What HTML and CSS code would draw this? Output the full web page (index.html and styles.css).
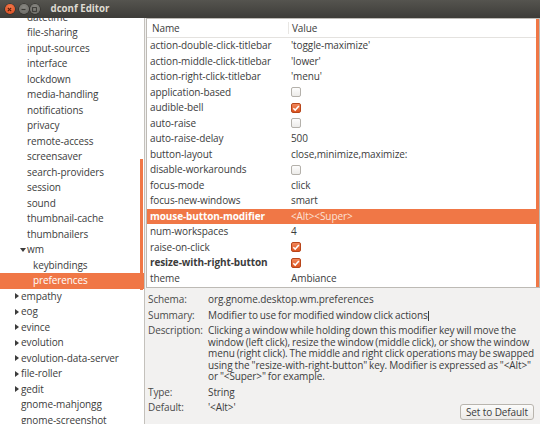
FILE: index.html
```html
<!DOCTYPE html>
<html>
<head>
<meta charset="utf-8">
<link rel="stylesheet" href="styles.css">
</head>
<body>
<div class="window">
  <div class="titlebar">
    <div class="controls">
      <span class="wbtn close"><svg width="9" height="9" viewBox="0 0 9 9"><path d="M2.8 2.8 L6.2 6.2 M6.2 2.8 L2.8 6.2" stroke="#5a1e08" stroke-width="1.2"/></svg></span>
      <span class="wbtn min"><svg width="9" height="9" viewBox="0 0 9 9"><path d="M2.5 4.5 H6.5" stroke="#3a3935" stroke-width="1.2"/></svg></span>
      <span class="wbtn max"><svg width="9" height="9" viewBox="0 0 9 9"><rect x="2.6" y="2.6" width="3.8" height="3.8" fill="none" stroke="#3a3935" stroke-width="1"/></svg></span>
    </div>
    <div class="title">dconf Editor</div>
  </div>
  <div class="body">
    <div class="sidebar">
      <div class="tree">
        <div class="node lv1"><span class="exp"></span>datetime</div>
        <div class="node lv1"><span class="exp"></span>file-sharing</div>
        <div class="node lv1"><span class="exp"></span>input-sources</div>
        <div class="node lv1"><span class="exp"></span>interface</div>
        <div class="node lv1"><span class="exp"></span>lockdown</div>
        <div class="node lv1"><span class="exp"></span>media-handling</div>
        <div class="node lv1"><span class="exp"></span>notifications</div>
        <div class="node lv1"><span class="exp"></span>privacy</div>
        <div class="node lv1"><span class="exp"></span>remote-access</div>
        <div class="node lv1"><span class="exp"></span>screensaver</div>
        <div class="node lv1"><span class="exp"></span>search-providers</div>
        <div class="node lv1"><span class="exp"></span>session</div>
        <div class="node lv1"><span class="exp"></span>sound</div>
        <div class="node lv1"><span class="exp"></span>thumbnail-cache</div>
        <div class="node lv1"><span class="exp"></span>thumbnailers</div>
        <div class="node lv1"><span class="exp open"></span>wm</div>
        <div class="node lv2"><span class="exp"></span>keybindings</div>
        <div class="node lv2 selected"><span class="exp"></span>preferences</div>
        <div class="node lv0"><span class="exp closed"></span>empathy</div>
        <div class="node lv0"><span class="exp closed"></span>eog</div>
        <div class="node lv0"><span class="exp closed"></span>evince</div>
        <div class="node lv0"><span class="exp closed"></span>evolution</div>
        <div class="node lv0"><span class="exp closed"></span>evolution-data-server</div>
        <div class="node lv0"><span class="exp closed"></span>file-roller</div>
        <div class="node lv0"><span class="exp closed"></span>gedit</div>
        <div class="node lv0"><span class="exp"></span>gnome-mahjongg</div>
        <div class="node lv0"><span class="exp"></span>gnome-screenshot</div>
      </div>
      <div class="scroll-ind side"></div>
    </div>
    <div class="main">
      <div class="keys">
        <div class="thead">
          <div class="hc1">Name</div>
          <div class="hc2">Value</div>
        </div>
        <div class="row"><div class="c1">action-double-click-titlebar</div><div class="c2">'toggle-maximize'</div></div>
        <div class="row"><div class="c1">action-middle-click-titlebar</div><div class="c2">'lower'</div></div>
        <div class="row"><div class="c1">action-right-click-titlebar</div><div class="c2">'menu'</div></div>
        <div class="row"><div class="c1">application-based</div><div class="c2"><span class="cb"></span></div></div>
        <div class="row"><div class="c1">audible-bell</div><div class="c2"><span class="cb on"><svg width="10" height="10" viewBox="0 0 10 10"><path d="M2.3 5.2 L4.2 7.1 L7.9 2.9" fill="none" stroke="#fff" stroke-width="1.5"/></svg></span></div></div>
        <div class="row"><div class="c1">auto-raise</div><div class="c2"><span class="cb"></span></div></div>
        <div class="row"><div class="c1">auto-raise-delay</div><div class="c2">500</div></div>
        <div class="row"><div class="c1">button-layout</div><div class="c2">close,minimize,maximize:</div></div>
        <div class="row"><div class="c1">disable-workarounds</div><div class="c2"><span class="cb"></span></div></div>
        <div class="row"><div class="c1">focus-mode</div><div class="c2">click</div></div>
        <div class="row"><div class="c1">focus-new-windows</div><div class="c2">smart</div></div>
        <div class="row selected"><div class="c1 bold">mouse-button-modifier</div><div class="c2">&lt;Alt&gt;&lt;Super&gt;</div></div>
        <div class="row"><div class="c1">num-workspaces</div><div class="c2">4</div></div>
        <div class="row"><div class="c1">raise-on-click</div><div class="c2"><span class="cb on"><svg width="10" height="10" viewBox="0 0 10 10"><path d="M2.3 5.2 L4.2 7.1 L7.9 2.9" fill="none" stroke="#fff" stroke-width="1.5"/></svg></span></div></div>
        <div class="row"><div class="c1 bold">resize-with-right-button</div><div class="c2"><span class="cb on"><svg width="10" height="10" viewBox="0 0 10 10"><path d="M2.3 5.2 L4.2 7.1 L7.9 2.9" fill="none" stroke="#fff" stroke-width="1.5"/></svg></span></div></div>
        <div class="row"><div class="c1">theme</div><div class="c2">Ambiance</div></div>
        <div class="scroll-ind keys-ind"></div>
      </div>
      <div class="info">
        <div class="lbl">Schema:</div><div class="val">org.gnome.desktop.wm.preferences</div>
        <div class="lbl">Summary:</div><div class="val">Modifier to use for modified window click actions<span class="caret"></span></div>
        <div class="lbl">Description:</div><div class="val">Clicking a window while holding down this modifier key will move the<br>window (left click), resize the window (middle click), or show the window<br>menu (right click). The middle and right click operations may be swapped<br>using the "resize-with-right-button" key. Modifier is expressed as "&lt;Alt&gt;"<br>or "&lt;Super&gt;" for example.</div>
        <div class="lbl">Type:</div><div class="val">String</div>
        <div class="lbl">Default:</div><div class="val default"><span>'&lt;Alt&gt;'</span><button class="btn">Set to Default</button></div>
      </div>
    </div>
  </div>
</div>
</body>
</html>
```
FILE: styles.css
```css
* { box-sizing: border-box; margin: 0; padding: 0; }
html, body { width: 540px; height: 424px; overflow: hidden; }
body {
  font-family: "Open Sans", "DejaVu Sans", sans-serif;
  font-size: 10px;
  letter-spacing: -0.1px;
  color: #3c3c3c;
  background: #f2f1f0;
}
.window { width: 540px; height: 424px; display: flex; flex-direction: column; }

.titlebar {
  height: 18px;
  flex: none;
  background: linear-gradient(#55544f, #3d3c38);
  display: flex;
  align-items: center;
  padding-left: 5px;
}
.controls { display: flex; align-items: center; }
.wbtn {
  width: 9.5px; height: 9.5px; border-radius: 50%;
  display: flex; align-items: center; justify-content: center;
}
.wbtn.close { background: radial-gradient(circle at 50% 35%, #f77c4f, #d2461a); box-shadow: 0 0 0 0.5px #2c2b28; }
.wbtn.min { margin-left: 4.5px; background: radial-gradient(circle at 50% 35%, #8a8984, #66655f); box-shadow: 0 0 0 0.5px #2c2b28; }
.wbtn.max { margin-left: 1.5px; background: radial-gradient(circle at 50% 35%, #8a8984, #66655f); box-shadow: 0 0 0 0.5px #2c2b28; }
.title {
  margin-left: 11px;
  color: #dfdbd2;
  font-weight: bold;
  font-size: 9.7px;
  letter-spacing: 0;
  line-height: 16px;
}

.body { flex: 1; display: flex; min-height: 0; }

.sidebar {
  width: 145px;
  flex: none;
  background: #fff;
  border-right: 1px solid #c4c1bc;
  position: relative;
  overflow: hidden;
}
.tree { margin-top: -8.25px; }
.node {
  height: 15.5px;
  line-height: 15.5px;
  display: flex;
  align-items: center;
  white-space: nowrap;
}
.node.lv0 { padding-left: 14px; }
.node.lv1 { padding-left: 20px; }
.node.lv2 { padding-left: 26px; }
.node.selected { background: #f07746; color: #fff; }
.exp { width: 7px; height: 15.5px; flex: none; position: relative; }
.exp.closed::before {
  content: ""; position: absolute; left: 0.5px; top: 4.5px;
  border-left: 4px solid #3c3c3c;
  border-top: 3px solid transparent;
  border-bottom: 3px solid transparent;
}
.exp.open::before {
  content: ""; position: absolute; left: -0.5px; top: 6px;
  border-top: 4px solid #3c3c3c;
  border-left: 3px solid transparent;
  border-right: 3px solid transparent;
}

.scroll-ind { position: absolute; background: #f07746; width: 3px; }
.scroll-ind.side { left: 140px; top: 141px; height: 131px; }

.main { flex: 1; display: flex; flex-direction: column; padding-left: 1px; }

.keys {
  height: 270px;
  flex: none;
  background: #fff;
  border: 1px solid #bdbab5;
  position: relative;
}
.keys-ind { right: 0; top: 0; bottom: 0; }
.thead {
  height: 19px;
  display: grid;
  grid-template-columns: 141px 1fr;
  border-bottom: 1px solid #e4e2df;
  align-items: center;
}
.hc1 { padding-left: 5px; line-height: 18px; }
.hc2 { padding-left: 3px; line-height: 12px; border-left: 1px solid #e8e6e3; }
.row {
  height: 15.5px;
  display: grid;
  grid-template-columns: 141px 1fr;
  white-space: nowrap;
}
.c1 { padding-left: 3px; line-height: 15.5px; }
.c2 { padding-left: 3px; line-height: 15.5px; display: flex; align-items: center; }
.bold { font-weight: bold; }
.row.selected { background: #f07746; color: #fff; }
.row.selected .c2 { color: #fde2d6; }

.cb {
  width: 10px; height: 10px;
  border: 1px solid #b4b1ab;
  border-radius: 2px;
  background: linear-gradient(#fdfdfd, #ecebe9);
  display: inline-block;
}
.cb.on {
  border-color: #b8451a;
  background: linear-gradient(#f1875a, #dc5420);
}
.cb svg { display: block; margin: -1px; }

.info {
  display: grid;
  grid-template-columns: 60px 1fr;
  padding: 4px 0 0 2px;
  white-space: nowrap;
  word-spacing: -0.5px;
}
.lbl, .val { line-height: 11.5px; padding: 2px 0; }
.lbl { color: #4a4a4a; }
.caret {
  display: inline-block; width: 1px; height: 10px;
  background: #3c3c3c; vertical-align: -2px; margin-left: 0.5px;
}
.val.default { display: flex; align-items: flex-start; }
.btn {
  margin-left: auto;
  margin-right: 6px;
  margin-top: 2px;
  height: 16px;
  padding: 0 5px;
  font-family: "Open Sans", "DejaVu Sans", sans-serif;
  font-size: 10px;
  letter-spacing: -0.1px;
  word-spacing: 0;
  line-height: 14px;
  color: #3c3c3c;
  border: 1px solid #b9b5ae;
  border-radius: 3px;
  background: linear-gradient(#fbfbfa, #eceae7);
}
```
